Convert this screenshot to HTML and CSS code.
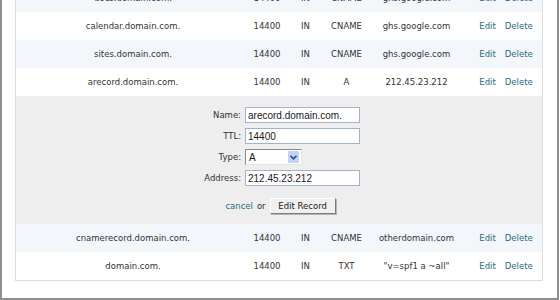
FILE: index.html
```html
<!DOCTYPE html>
<html>
<head>
<meta charset="utf-8">
<link rel="stylesheet" href="styles.css">
</head>
<body>
<div class="frame">
  <div class="records">
    <div class="row alt">
      <span>docs.domain.com.</span><span>14400</span><span>IN</span><span>CNAME</span><span>ghs.google.com</span>
      <span class="actions"><a href="#">Edit</a><a href="#">Delete</a></span>
    </div>
    <div class="row">
      <span>calendar.domain.com.</span><span>14400</span><span>IN</span><span>CNAME</span><span>ghs.google.com</span>
      <span class="actions"><a href="#">Edit</a><a href="#">Delete</a></span>
    </div>
    <div class="row alt">
      <span>sites.domain.com.</span><span>14400</span><span>IN</span><span>CNAME</span><span>ghs.google.com</span>
      <span class="actions"><a href="#">Edit</a><a href="#">Delete</a></span>
    </div>
    <div class="row">
      <span>arecord.domain.com.</span><span>14400</span><span>IN</span><span>A</span><span>212.45.23.212</span>
      <span class="actions"><a href="#">Edit</a><a href="#">Delete</a></span>
    </div>
    <form class="editor">
      <div class="fields">
        <label class="lbl">Name:</label><input class="field" type="text" value="arecord.domain.com.">
        <label class="lbl">TTL:</label><input class="field" type="text" value="14400">
        <label class="lbl">Type:</label>
        <span class="select"><span class="select-val">A</span><span class="select-btn"><svg width="7" height="5" viewBox="0 0 7 5"><path d="M0.5 0.8 L3.5 3.8 L6.5 0.8" fill="none" stroke="#2d4f9e" stroke-width="1.6"/></svg></span></span>
        <label class="lbl">Address:</label><input class="field" type="text" value="212.45.23.212">
      </div>
      <div class="submit">
        <a href="#" class="cancel">cancel</a><span class="or">or</span><button type="button" class="btn">Edit Record</button>
      </div>
    </form>
    <div class="row alt">
      <span>cnamerecord.domain.com.</span><span>14400</span><span>IN</span><span>CNAME</span><span>otherdomain.com</span>
      <span class="actions"><a href="#">Edit</a><a href="#">Delete</a></span>
    </div>
    <div class="row">
      <span>domain.com.</span><span>14400</span><span>IN</span><span>TXT</span><span>"v=spf1 a ~all"</span>
      <span class="actions"><a href="#">Edit</a><a href="#">Delete</a></span>
    </div>
  </div>
</div>
</body>
</html>
```
FILE: styles.css
```css
html, body {
  margin: 0;
  padding: 0;
  background: #ffffff;
}
body {
  font-family: "DejaVu Sans", Verdana, sans-serif;
  font-size: 8.5px;
  color: #333333;
  overflow: hidden;
}
.frame {
  box-sizing: border-box;
  width: 559px;
  margin-top: -17px;
  border: 2px solid #8e8e8e;
  border-top: none;
  padding: 0 14px 17px 13px;
}
.records {
  border: 1px solid #dcdcdc;
}
.row {
  display: grid;
  grid-template-columns: 234px 34px 43px 39px 101px 1fr;
  height: 28px;
  align-items: center;
  text-align: center;
  background: #ffffff;
  white-space: nowrap;
}
.row.alt {
  background: #f3f6fb;
}
.actions {
  display: flex;
  justify-content: center;
  gap: 9px;
  padding-left: 3px;
}
a {
  color: #2a6d80;
  text-decoration: none;
}
.editor {
  margin: 0;
  background: #eeeeee;
  padding: 11px 0 10px;
}
.fields {
  display: grid;
  grid-template-columns: 225px 115px;
  column-gap: 4px;
  row-gap: 5px;
  align-items: center;
}
.lbl {
  text-align: right;
  color: #333333;
}
.field {
  box-sizing: border-box;
  width: 115px;
  height: 16px;
  margin: 0;
  padding: 0 2px;
  border: 1px solid #a3b2cb;
  background: #ffffff;
  font-family: "Liberation Sans", Arial, sans-serif;
  font-size: 10px;
  color: #1a1a1a;
  outline: none;
}
.select {
  box-sizing: border-box;
  width: 57px;
  height: 16px;
  display: flex;
  align-items: center;
  justify-content: space-between;
  background: #ffffff;
  border: 1px solid;
  border-color: #8a8a8a #e4e4e4 #e4e4e4 #8a8a8a;
  padding: 0 2px 0 3px;
}
.select-val {
  font-family: "Liberation Sans", Arial, sans-serif;
  font-size: 10px;
  color: #1a1a1a;
}
.select-btn {
  width: 11px;
  height: 12px;
  background: #c3d3f3;
  border-radius: 1px;
  display: flex;
  align-items: center;
  justify-content: center;
}
.submit {
  display: flex;
  justify-content: center;
  align-items: center;
  margin-top: 12px;
  padding-left: 3px;
}
.cancel {
  margin-right: 4px;
}
.or {
  margin-right: 4px;
}
.btn {
  box-sizing: border-box;
  width: 66px;
  height: 16px;
  margin: 0;
  padding: 0;
  font-family: "DejaVu Sans", Verdana, sans-serif;
  font-size: 8.5px;
  color: #222222;
  background: #f0f0f0;
  border: 1px solid;
  border-color: #ffffff #7c7c7c #7c7c7c #ffffff;
  box-shadow: 1px 1px 0 #b5b5b5;
}
```
